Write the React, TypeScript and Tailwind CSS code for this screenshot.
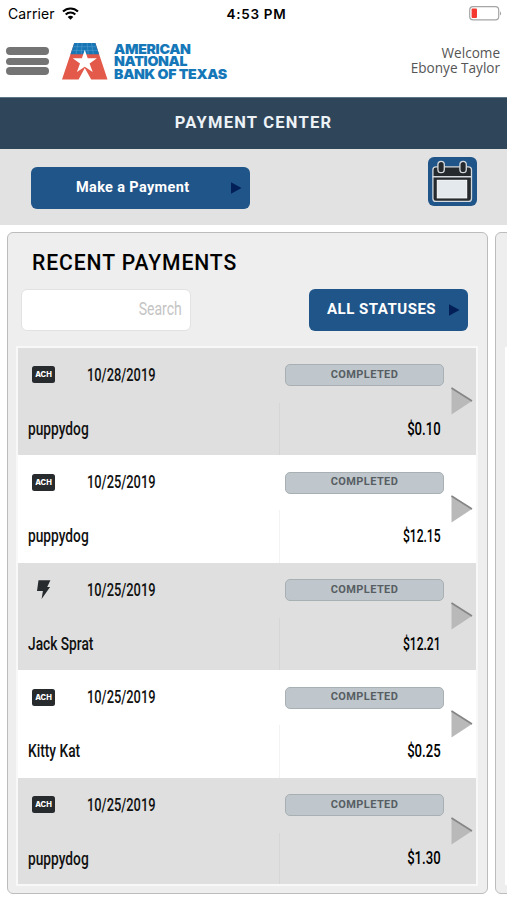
import type { ReactNode } from 'react';

interface Payment {
    type: 'ach' | 'instant';
    date: string;
    payee: string;
    amount: string;
}

const payments: Payment[] = [
    { type: 'ach', date: '10/28/2019', payee: 'puppydog', amount: '$0.10' },
    { type: 'ach', date: '10/25/2019', payee: 'puppydog', amount: '$12.15' },
    { type: 'instant', date: '10/25/2019', payee: 'Jack Sprat', amount: '$12.21' },
    { type: 'ach', date: '10/25/2019', payee: 'Kitty Kat', amount: '$0.25' },
    { type: 'ach', date: '10/25/2019', payee: 'puppydog', amount: '$1.30' },
];

function StatusBar() {
    return (
        <div className="flex h-[28px] items-center justify-between pl-[8px] pr-[5px] font-['Inter',sans-serif] text-black">
            <div className="flex w-[160px] items-center gap-[7px]">
                <span className="text-[14px] leading-[28px] tracking-[0.1px]">Carrier</span>
                <svg className="-mt-[2px]" width="17" height="13" viewBox="0 0 17 13" fill="none" stroke="#000" strokeWidth="2.1">
                    <path d="M1 4.6C5.2.5 11.8.5 16 4.6" />
                    <path d="M3.7 7.5c2.7-2.6 6.9-2.6 9.6 0" />
                    <path d="M8.5 12.8 5.7 9.9c1.6-1.5 4-1.5 5.6 0z" fill="#000" stroke="none" />
                </svg>
            </div>
            <span className="text-[13.5px] font-semibold leading-[28px] tracking-[0.7px]">4:53 PM</span>
            <div className="flex w-[157px] justify-end">
                <svg className="-mt-[2px]" width="33" height="15" viewBox="0 0 33 15">
                    <rect x="0.7" y="0.7" width="29" height="13.2" rx="3.4" fill="#fff" stroke="#a5a5a5" strokeWidth="1.2" />
                    <rect x="2.6" y="2.6" width="5.4" height="9.4" rx="1" fill="#f4382f" />
                    <path d="M31 5.2v4.4c1.5-.7 1.5-3.7 0-4.4z" fill="#a5a5a5" />
                </svg>
            </div>
        </div>
    );
}

function BankLogo() {
    return (
        <div className="flex items-start">
            <svg width="46" height="37" viewBox="0 0 46 37">
                <path d="M12.2 0h21.2L45.5 36.5H29.2L22.8 25l-6.2 11.5H0z" fill="#e35a4b" />
                <path d="M12.2 0h21.2l3.7 11.2H8.5z" fill="#1976b5" />
                <path d="M11.6 3.7h23M10.3 7.4h25.5M16 0l-2 11M20.2 0l-1 11M25.2 0l1 11M29.4 0l2 11" stroke="#5ba3d0" strokeWidth="0.5" />
                <path d="M22.8 6.8l2.9 8.4h9.2l-7.3 5.2 3.1 8.6-7.9-5.2-7.9 5.2 3.1-8.6-7.3-5.2h9.2z" fill="#fff" />
            </svg>
            <div className="ml-[6px] w-[116px] font-['Inter',sans-serif] text-[13.6px] font-black leading-[12.4px] text-[#1577b8]">
                <span className="block w-max origin-left scale-x-[1.04] tracking-[-0.3px]">AMERICAN</span>
                <span className="block w-max origin-left scale-x-[1.04] tracking-[-0.3px]">NATIONAL</span>
                <span className="block w-max origin-left scale-x-[1.04] tracking-[-0.3px]">BANK OF TEXAS</span>
            </div>
        </div>
    );
}

function Header() {
    return (
        <header className="flex h-[69px] items-start justify-between pl-[6px] pr-[7px]">
            <div className="flex">
                <button className="mt-[19px] flex h-[28px] w-[43px] flex-col justify-between">
                    <span className="h-[8px] w-full rounded-full bg-[#747474]" />
                    <span className="h-[7px] w-full rounded-full bg-[#747474]" />
                    <span className="h-[8px] w-full rounded-full bg-[#747474]" />
                </button>
                <div className="ml-[13px] mt-[15px]">
                    <BankLogo />
                </div>
            </div>
            <div className="mt-[17px] text-right font-['Open_Sans',sans-serif] text-[14px] leading-[15px] text-[#555]">
                <div className="origin-right scale-x-[0.97]">Welcome</div>
                <div className="origin-right scale-x-[0.97]">Ebonye Taylor</div>
            </div>
        </header>
    );
}

function CalendarIcon() {
    return (
        <svg width="49" height="49" viewBox="0 0 49 49">
            <rect width="49" height="49" rx="6" fill="#1f5589" />
            <rect x="4.9" y="9.8" width="38.6" height="34.6" rx="3" fill="#252a2e" stroke="#d5dade" strokeWidth="1.3" />
            <path d="M4.5 19.8H44" stroke="#d5dade" strokeWidth="1.6" />
            <rect x="9.3" y="23.3" width="29.4" height="17.6" fill="#e3e9ed" stroke="#fff" strokeWidth="1" />
            <rect x="9.9" y="4.3" width="6.4" height="11.4" rx="3.2" fill="#252a2e" stroke="#d5dade" strokeWidth="1.3" />
            <rect x="31.9" y="4.3" width="6.4" height="11.4" rx="3.2" fill="#252a2e" stroke="#d5dade" strokeWidth="1.3" />
        </svg>
    );
}

function BlueButton({ className, children }: { className: string; children: ReactNode }) {
    return (
        <button className={`flex h-[42px] items-center justify-between rounded-[6px] bg-[#1f5589] pr-[8px] font-['Roboto',sans-serif] font-bold text-white ${className}`}>
            <span className="-mt-[1px]">{children}</span>
            <svg width="11" height="12" viewBox="0 0 11 12">
                <path d="M0 .3 10.5 6 0 11.7z" fill="#021f57" />
            </svg>
        </button>
    );
}

function PaymentRow({ payment, shaded }: { payment: Payment; shaded: boolean }) {
    return (
        <div className={`flex h-[107.5px] last:h-[106px] ${shaded ? 'bg-[#dfdfdf]' : 'bg-white'}`}>
            <div className="w-[261px] font-['Roboto',sans-serif] text-[17.5px] font-medium text-[#111]">
                <div className="flex h-[54.5px] items-center pl-[14px]">
                    <div className="flex w-[54.5px]">
                        {payment.type === 'ach' ? (
                            <span className="flex h-[17px] w-[23px] items-center justify-center rounded-[2.5px] bg-[#272b2e] font-['Inter',sans-serif] text-[7.5px] font-extrabold leading-none text-white">
                                ACH
                            </span>
                        ) : (
                            <svg className="ml-[5px]" width="14" height="19" viewBox="0 0 14 19">
                                <path d="M1.5.3h11.9L10.2 7h2.9L4.6 18.9l1.3-8H0z" fill="#272b2e" />
                            </svg>
                        )}
                    </div>
                    <span className="origin-left scale-x-[0.735]">{payment.date}</span>
                </div>
                <div className="flex h-[53.5px] items-center pl-[10px]">
                    <span className="origin-left scale-x-[0.785]">{payment.payee}</span>
                </div>
            </div>
            <div className="flex w-[172px] flex-col">
                <div className="flex h-[55px] items-center pl-[6px]">
                    <span className="flex h-[22px] w-[159px] items-center justify-center rounded-[5px] border border-[#a8b0b4] bg-[#bfc7cc] font-['Roboto',sans-serif] text-[11px] font-bold tracking-[0.4px] text-[#575e63]">
                        COMPLETED
                    </span>
                </div>
                <div className={`flex flex-1 items-center justify-end border-l pr-[10px] font-['Roboto',sans-serif] text-[17.5px] font-medium text-black ${shaded ? 'border-[#d6d6d6]' : 'border-[#f3f3f3]'}`}>
                    <span className={`origin-right ${payment.amount.length > 5 ? 'scale-x-[0.69]' : 'scale-x-[0.75]'}`}>{payment.amount}</span>
                </div>
            </div>
            <svg className="mt-[39.5px]" width="22" height="28" viewBox="0 0 22 28">
                <path d="M.5.5 21 14 .5 27.5z" fill="#b9b9b9" />
                <path d="M.5 1 21 14" stroke="#858585" strokeWidth="1.6" />
            </svg>
        </div>
    );
}

export default function App() {
    return (
        <div className="h-[900px] w-[507px] overflow-hidden bg-white">
            <StatusBar />
            <Header />
            <div className="flex h-[51.5px] items-center justify-center border-t border-[#5f7687] bg-[#2f465a] font-['Roboto',sans-serif] text-[16.5px] font-bold tracking-[1.25px] text-[#edf2f7]">
                PAYMENT CENTER
            </div>
            <div className="flex h-[76.5px] items-start justify-between bg-[#e2e2e2] pl-[31px] pr-[30.5px]">
                <BlueButton className="mt-[18.5px] w-[219px] pl-[45px] text-[14.5px] tracking-[0.35px]">Make a Payment</BlueButton>
                <div className="mt-[8.5px]">
                    <CalendarIcon />
                </div>
            </div>
            <div className="mt-[7px] flex gap-[7px] pl-[7px]">
                <section className="h-[662px] w-[481px] shrink-0 rounded-[6px] border-[1.5px] border-[#bcbcbc] bg-[#eee]">
                    <h1 className="ml-[24px] mt-[15px] h-[30px] w-max origin-left scale-x-[0.96] font-['Roboto',sans-serif] text-[22px] font-medium leading-[30px] tracking-[0.95px] text-black">
                        RECENT PAYMENTS
                    </h1>
                    <div className="mt-[11px] flex justify-between pl-[13px] pr-[19px]">
                        <div className="flex h-[42px] w-[170px] items-center justify-end rounded-[6px] border border-[#e2e2e2] bg-white pr-[8px] font-['Roboto',sans-serif] text-[17.5px] text-[#c4c4c4]">
                            <span className="-mt-[2px] origin-right scale-x-[0.8]">Search</span>
                        </div>
                        <BlueButton className="w-[159px] pl-[18px] text-[15px] tracking-[0.5px]">ALL STATUSES</BlueButton>
                    </div>
                    <div className="ml-[8px] mt-[14.5px] w-[462px] border-2 border-[#f8f8f8]">
                        {payments.map((payment, i) => (
                            <PaymentRow key={i} payment={payment} shaded={i % 2 === 0} />
                        ))}
                    </div>
                </section>
                <section className="h-[662px] w-[60px] shrink-0 rounded-[6px] border-[1.5px] border-[#bcbcbc] bg-[#eee]">
                    <div className="ml-[9px] mt-[114px] h-[538px] bg-white" />
                </section>
            </div>
        </div>
    );
}
